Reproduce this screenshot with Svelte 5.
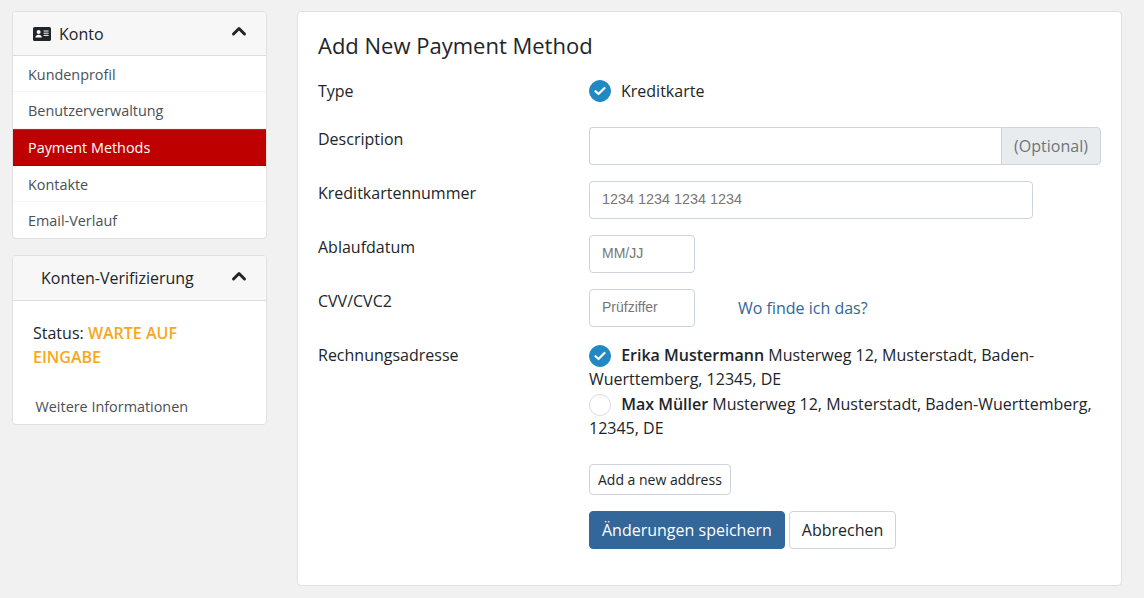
<script>
  const menu = [
    { label: 'Kundenprofil' },
    { label: 'Benutzerverwaltung' },
    { label: 'Payment Methods', active: true },
    { label: 'Kontakte' },
    { label: 'Email-Verlauf' }
  ];
</script>

{#snippet chevron()}
  <svg class="chevron" width="16" height="11" viewBox="0 0 16 11" fill="none" stroke="#212529" stroke-width="3" stroke-linecap="round" stroke-linejoin="round" aria-hidden="true">
    <polyline points="2.5 8 8 2.5 13.5 8" />
  </svg>
{/snippet}

{#snippet check()}
  <span class="radio checked">
    <svg width="12" height="10" viewBox="0 0 12 10" fill="none" stroke="#fff" stroke-width="2.2" stroke-linecap="round" stroke-linejoin="round" aria-hidden="true">
      <polyline points="1.5 5.2 4.5 8 10.5 2" />
    </svg>
  </span>
{/snippet}

<div class="page">
  <aside class="sidebar">
    <section class="card">
      <header class="card-head konto">
        <span class="head-title">
          <svg width="18" height="14" viewBox="0 0 18 14" aria-hidden="true">
            <rect width="18" height="14" rx="1.6" fill="#212529" />
            <circle cx="5.6" cy="5" r="2" fill="#fff" />
            <path d="M2.4 10.6c0-1.7 1.3-2.9 3.2-2.9s3.2 1.2 3.2 2.9z" fill="#fff" />
            <path d="M10.6 4h5M10.6 6.2h5M10.6 8.4h5" stroke="#fff" stroke-width="1" />
          </svg>
          Konto
        </span>
        {@render chevron()}
      </header>
      <nav class="menu">
        {#each menu as item}
          <a href="#top" class="menu-item" class:active={item.active}>{item.label}</a>
        {/each}
      </nav>
    </section>

    <section class="card">
      <header class="card-head verify">
        <span class="head-title">Konten-Verifizierung</span>
        {@render chevron()}
      </header>
      <div class="verify-body">
        <p class="status">Status: <strong>WARTE AUF EINGABE</strong></p>
        <a href="#top" class="more">Weitere Informationen</a>
      </div>
    </section>
  </aside>

  <main class="panel">
    <h1>Add New Payment Method</h1>

    <div class="row type-row">
      <div class="label">Type</div>
      <div class="value type-value">
        {@render check()}
        <span>Kreditkarte</span>
      </div>
    </div>

    <div class="row">
      <div class="label">Description</div>
      <div class="value group">
        <input type="text" class="desc-input" />
        <span class="addon">(Optional)</span>
      </div>
    </div>

    <div class="row">
      <div class="label">Kreditkartennummer</div>
      <div class="value">
        <div class="field card-field">1234 1234 1234 1234</div>
      </div>
    </div>

    <div class="row">
      <div class="label">Ablaufdatum</div>
      <div class="value">
        <div class="field small-field">MM/JJ</div>
      </div>
    </div>

    <div class="row">
      <div class="label">CVV/CVC2</div>
      <div class="value cvv-value">
        <div class="field small-field">Prüfziffer</div>
        <a href="#top" class="where">Wo finde ich das?</a>
      </div>
    </div>

    <div class="row address-row">
      <div class="label">Rechnungsadresse</div>
      <div class="value">
        <div class="address">
          {@render check()}
          <strong>Erika Mustermann</strong> Musterweg 12, Musterstadt, Baden-Wuerttemberg, 12345, DE
        </div>
        <div class="address">
          <span class="radio"></span>
          <strong>Max Müller</strong> Musterweg 12, Musterstadt, Baden-Wuerttemberg, 12345, DE
        </div>
        <button type="button" class="btn btn-sm">Add a new address</button>
        <div class="actions">
          <button type="button" class="btn btn-primary">Änderungen speichern</button>
          <button type="button" class="btn">Abbrechen</button>
        </div>
      </div>
    </div>
  </main>
</div>

<style>
  :global(body) {
    margin: 0;
    background: #f1f1f1;
    color: #212529;
    font-family: 'Open Sans', sans-serif;
    font-size: 16px;
    line-height: 24px;
  }

  .page {
    display: flex;
    align-items: flex-start;
    gap: 30px;
    padding: 11px 22px 0 12px;
  }

  .sidebar {
    width: 255px;
    flex-shrink: 0;
    display: flex;
    flex-direction: column;
    gap: 16px;
  }

  .card {
    background: #fff;
    border: 1px solid #e0e0e0;
    border-radius: 4px;
    overflow: hidden;
  }

  .card-head {
    display: flex;
    align-items: center;
    justify-content: space-between;
    background: #f7f7f7;
    border-bottom: 1px solid #dcdcdc;
    padding-right: 19px;
  }

  .konto {
    height: 43px;
    padding-left: 20px;
  }

  .verify {
    height: 44px;
    padding-left: 28px;
  }

  .head-title {
    display: flex;
    align-items: center;
    gap: 8px;
  }

  .chevron {
    margin-top: -4px;
  }

  .menu {
    display: flex;
    flex-direction: column;
  }

  .menu-item {
    display: block;
    height: 36.25px;
    padding-left: 15px;
    box-sizing: border-box;
    line-height: 38px;
    font-size: 14.4px;
    color: #495057;
    text-decoration: none;
    border-bottom: 1px solid #f5f5f5;
  }

  .menu-item:last-child {
    border-bottom: none;
  }

  .menu-item.active {
    height: 37px;
    line-height: 36px;
    background: #bf0000;
    color: #fff;
    border-bottom: 1px solid #a80000;
    border-top: 1px solid #8f3a3a;
  }

  .verify-body {
    padding: 20px 20px 5px;
  }

  .status {
    margin: 0 0 26px;
  }

  .status strong {
    color: #f9a61a;
    font-weight: 600;
  }

  .more {
    display: block;
    padding-left: 2.5px;
    font-size: 14.4px;
    color: #495057;
    text-decoration: none;
  }

  .panel {
    flex: 1;
    box-sizing: border-box;
    height: 575px;
    background: #fff;
    border: 1px solid #e0e0e0;
    border-radius: 4px;
    padding: 18px 20px 0;
  }

  h1 {
    margin: 0 0 19px;
    font-size: 22px;
    font-weight: 400;
    line-height: 30px;
  }

  .row {
    display: flex;
    margin-bottom: 16px;
  }

  .type-row {
    margin-bottom: 24px;
  }

  .label {
    width: 271px;
    flex-shrink: 0;
  }

  .value {
    flex: 1;
    min-width: 0;
  }

  .type-value {
    display: flex;
    align-items: center;
    gap: 10px;
  }

  .radio {
    display: inline-flex;
    align-items: center;
    justify-content: center;
    box-sizing: border-box;
    width: 22px;
    height: 22px;
    margin: 2px 6px 0 0;
    border: 1px solid #dcdcdc;
    border-radius: 50%;
    background: #fff;
    vertical-align: top;
  }

  .radio.checked {
    background: #2088c2;
    border-color: #2088c2;
  }

  .type-value .radio {
    margin: 0;
  }

  .group {
    display: flex;
    height: 38px;
  }

  .desc-input {
    flex: 1;
    min-width: 0;
    box-sizing: border-box;
    height: 38px;
    border: 1px solid #ced4da;
    border-right: none;
    border-radius: 4px 0 0 4px;
    background: #fff;
    padding: 0;
  }

  .addon {
    box-sizing: border-box;
    width: 100px;
    height: 38px;
    line-height: 36px;
    text-align: center;
    color: #6c757d;
    background: #e9ecef;
    border: 1px solid #ced4da;
    border-radius: 0 4px 4px 0;
  }

  .field {
    box-sizing: border-box;
    height: 38px;
    line-height: 35px;
    padding-left: 12px;
    border: 1px solid #ced4da;
    border-radius: 4px;
    background: #fff;
    color: #777;
    font-family: 'Liberation Sans', Arial, sans-serif;
    font-size: 14.4px;
  }

  .card-field {
    width: 444px;
  }

  .small-field {
    width: 106px;
    font-size: 14px;
  }

  .cvv-value {
    display: flex;
    align-items: center;
    gap: 43px;
  }

  .where {
    color: #336699;
    text-decoration: none;
  }

  .address {
    line-height: 24.25px;
  }

  .address strong {
    font-weight: 600;
  }

  .address-row .btn-sm {
    display: block;
    margin-top: 24px;
  }

  .btn {
    box-sizing: border-box;
    height: 38px;
    padding: 0 12px;
    border: 1px solid #ced4da;
    border-radius: 4px;
    background: #fff;
    color: #212529;
    font-family: inherit;
    font-size: 16px;
  }

  .btn-sm {
    height: 31px;
    padding: 0 8px;
    font-size: 14px;
  }

  .btn-primary {
    background: #336699;
    border-color: #336699;
    color: #fff;
  }

  .actions {
    display: flex;
    gap: 4px;
    margin-top: 16px;
  }
</style>
